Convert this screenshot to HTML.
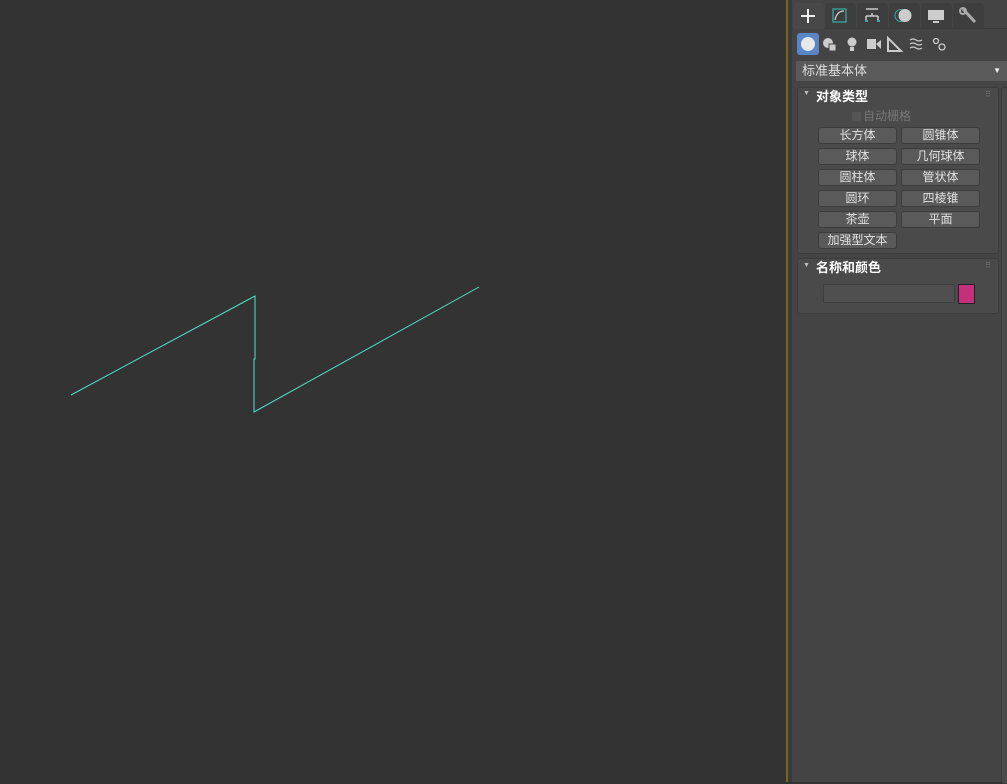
<!DOCTYPE html><html><head><meta charset="utf-8"><style>
body{margin:0;width:1007px;height:782px;background:#333333;position:relative;overflow:hidden;font-family:"Liberation Sans","Noto Sans CJK SC",sans-serif;font-size:12px;color:#ddd}
.a{position:absolute}
.btn{position:absolute;width:77px;height:15px;background:#5a5a5a;border:1px solid #3c3c3c;border-radius:3px;text-align:center;line-height:15px;font-size:12px;color:#e0e0e0;box-sizing:content-box}
.tab{position:absolute;top:3px;width:31px;height:25px;background:#3e3e3e;border-radius:4px 4px 0 0}
</style></head><body>
<svg class="a" style="left:0;top:0" width="786" height="782"><polyline points="71,395 255,296 255,359 254,359 254,412 479,287" fill="none" stroke="#4fe3c4" stroke-width="1"/></svg>
<div class="a" style="left:786px;top:0;width:2px;height:782px;background:#7a6420"></div>
<div class="a" style="left:788px;top:0;width:4px;height:782px;background:#3a3a3a"></div>
<div class="a" style="left:792px;top:0;width:215px;height:782px;background:#444"></div>
<div class="a" style="left:792px;top:28px;width:215px;height:1px;background:#3a3a3a"></div>
<div class="tab" style="left:793px;background:#484848;height:26px"></div>
<div class="tab" style="left:825px"></div><div class="tab" style="left:857px"></div><div class="tab" style="left:889px"></div><div class="tab" style="left:921px"></div><div class="tab" style="left:953px"></div>
<svg class="a" style="left:793px;top:3px" width="200" height="25">
<path d="M15 6v14M8 13h14" stroke="#eee" stroke-width="2"/>
<rect x="40" y="6" width="13" height="13" fill="none" stroke="#3aa7a0" stroke-width="1.3"/><path d="M42 17Q44 8 51 8" fill="none" stroke="#ccc" stroke-width="1.3"/>
<path d="M73 6h12M79 10v3M73 13h12M73 13v6M85 13v6" stroke="#ccc" stroke-width="1.5" fill="none"/><path d="M72 18h3M84 18h3" stroke="#3aa7a0" stroke-width="2"/>
<circle cx="108" cy="12.5" r="6" fill="none" stroke="#3aa7a0"/><circle cx="112" cy="12.5" r="6.5" fill="#ccc"/>
<rect x="135" y="7" width="16" height="10" fill="#ccc"/><rect x="140" y="18" width="6" height="2" fill="#ccc"/>
<path d="M170 6l12 13" stroke="#aaa" stroke-width="3"/><circle cx="170" cy="8" r="3" fill="none" stroke="#aaa" stroke-width="2"/>
</svg>
<div class="a" style="left:797px;top:33px;width:22px;height:22px;background:#5a86c8;border-radius:3px"></div>
<svg class="a" style="left:797px;top:33px" width="160" height="22">
<circle cx="11" cy="11" r="7" fill="#e8e8e8"/>
<circle cx="31" cy="10" r="5" fill="#ccc"/><rect x="32" y="11" width="7" height="7" fill="#ccc" stroke="#444"/>
<circle cx="55" cy="9" r="4.5" fill="#ccc"/><rect x="53" y="14" width="4" height="4" fill="#ccc"/>
<rect x="70" y="6" width="9" height="10" fill="#ccc"/><path d="M79 11l5-4v9z" fill="#ccc"/>
<path d="M91 5v13h13z" fill="none" stroke="#ccc" stroke-width="2"/>
<path d="M113 7q3-2 6 0t6 0M113 11q3-2 6 0t6 0M113 15q3-2 6 0t6 0" fill="none" stroke="#ccc" stroke-width="1.2"/>
<circle cx="139" cy="8" r="2.5" fill="none" stroke="#ccc" stroke-width="1.3"/><circle cx="145" cy="14" r="3" fill="none" stroke="#ccc" stroke-width="1.3"/>
</svg>
<div class="a" style="left:796px;top:61px;width:211px;height:20px;background:#5a5a5a;line-height:20px;padding-left:6px;box-sizing:border-box;font-size:13px;color:#ddd">标准基本体<span style="position:absolute;right:6px;font-size:8px;color:#eee">▼</span></div>
<div class="a" style="left:797px;top:87px;width:202px;height:167px;background:#4a4a4a;border:1px solid #3c3c3c;border-radius:3px;box-sizing:border-box"></div>
<div class="a" style="left:1001px;top:87px;width:6px;height:695px;background:#4a4a4a;border:1px solid #3c3c3c;border-radius:3px"></div>
<div class="a" style="left:803px;top:90px;font-size:7px;color:#bbb">▼</div>
<div class="a" style="left:816px;top:86px;font-size:13px;font-weight:bold;color:#fff">对象类型</div>
<div class="a" style="left:985px;top:90px;font-size:8px;color:#777">⠿</div>
<div class="a" style="left:851px;top:111px;width:9px;height:9px;background:#555;border:1px solid #4a4a4a"></div>
<div class="a" style="left:863px;top:107px;color:#777;font-size:12px">自动栅格</div>
<div class="btn" style="left:818px;top:127px">长方体</div><div class="btn" style="left:901px;top:127px">圆锥体</div>
<div class="btn" style="left:818px;top:148px">球体</div><div class="btn" style="left:901px;top:148px">几何球体</div>
<div class="btn" style="left:818px;top:169px">圆柱体</div><div class="btn" style="left:901px;top:169px">管状体</div>
<div class="btn" style="left:818px;top:190px">圆环</div><div class="btn" style="left:901px;top:190px">四棱锥</div>
<div class="btn" style="left:818px;top:211px">茶壶</div><div class="btn" style="left:901px;top:211px">平面</div>
<div class="btn" style="left:818px;top:232px">加强型文本</div>
<div class="a" style="left:797px;top:258px;width:202px;height:56px;background:#4a4a4a;border:1px solid #3c3c3c;border-radius:3px;box-sizing:border-box"></div>
<div class="a" style="left:803px;top:262px;font-size:7px;color:#bbb">▼</div>
<div class="a" style="left:816px;top:257px;font-size:13px;font-weight:bold;color:#fff">名称和颜色</div>
<div class="a" style="left:985px;top:261px;font-size:8px;color:#777">⠿</div>
<div class="a" style="left:823px;top:284px;width:132px;height:19px;background:#4f4f4f;border:1px solid #3e3e3e;box-sizing:border-box"></div>
<div class="a" style="left:958px;top:284px;width:17px;height:20px;background:#c4307c;border:1px solid #222;box-sizing:border-box"></div>
</body></html>
